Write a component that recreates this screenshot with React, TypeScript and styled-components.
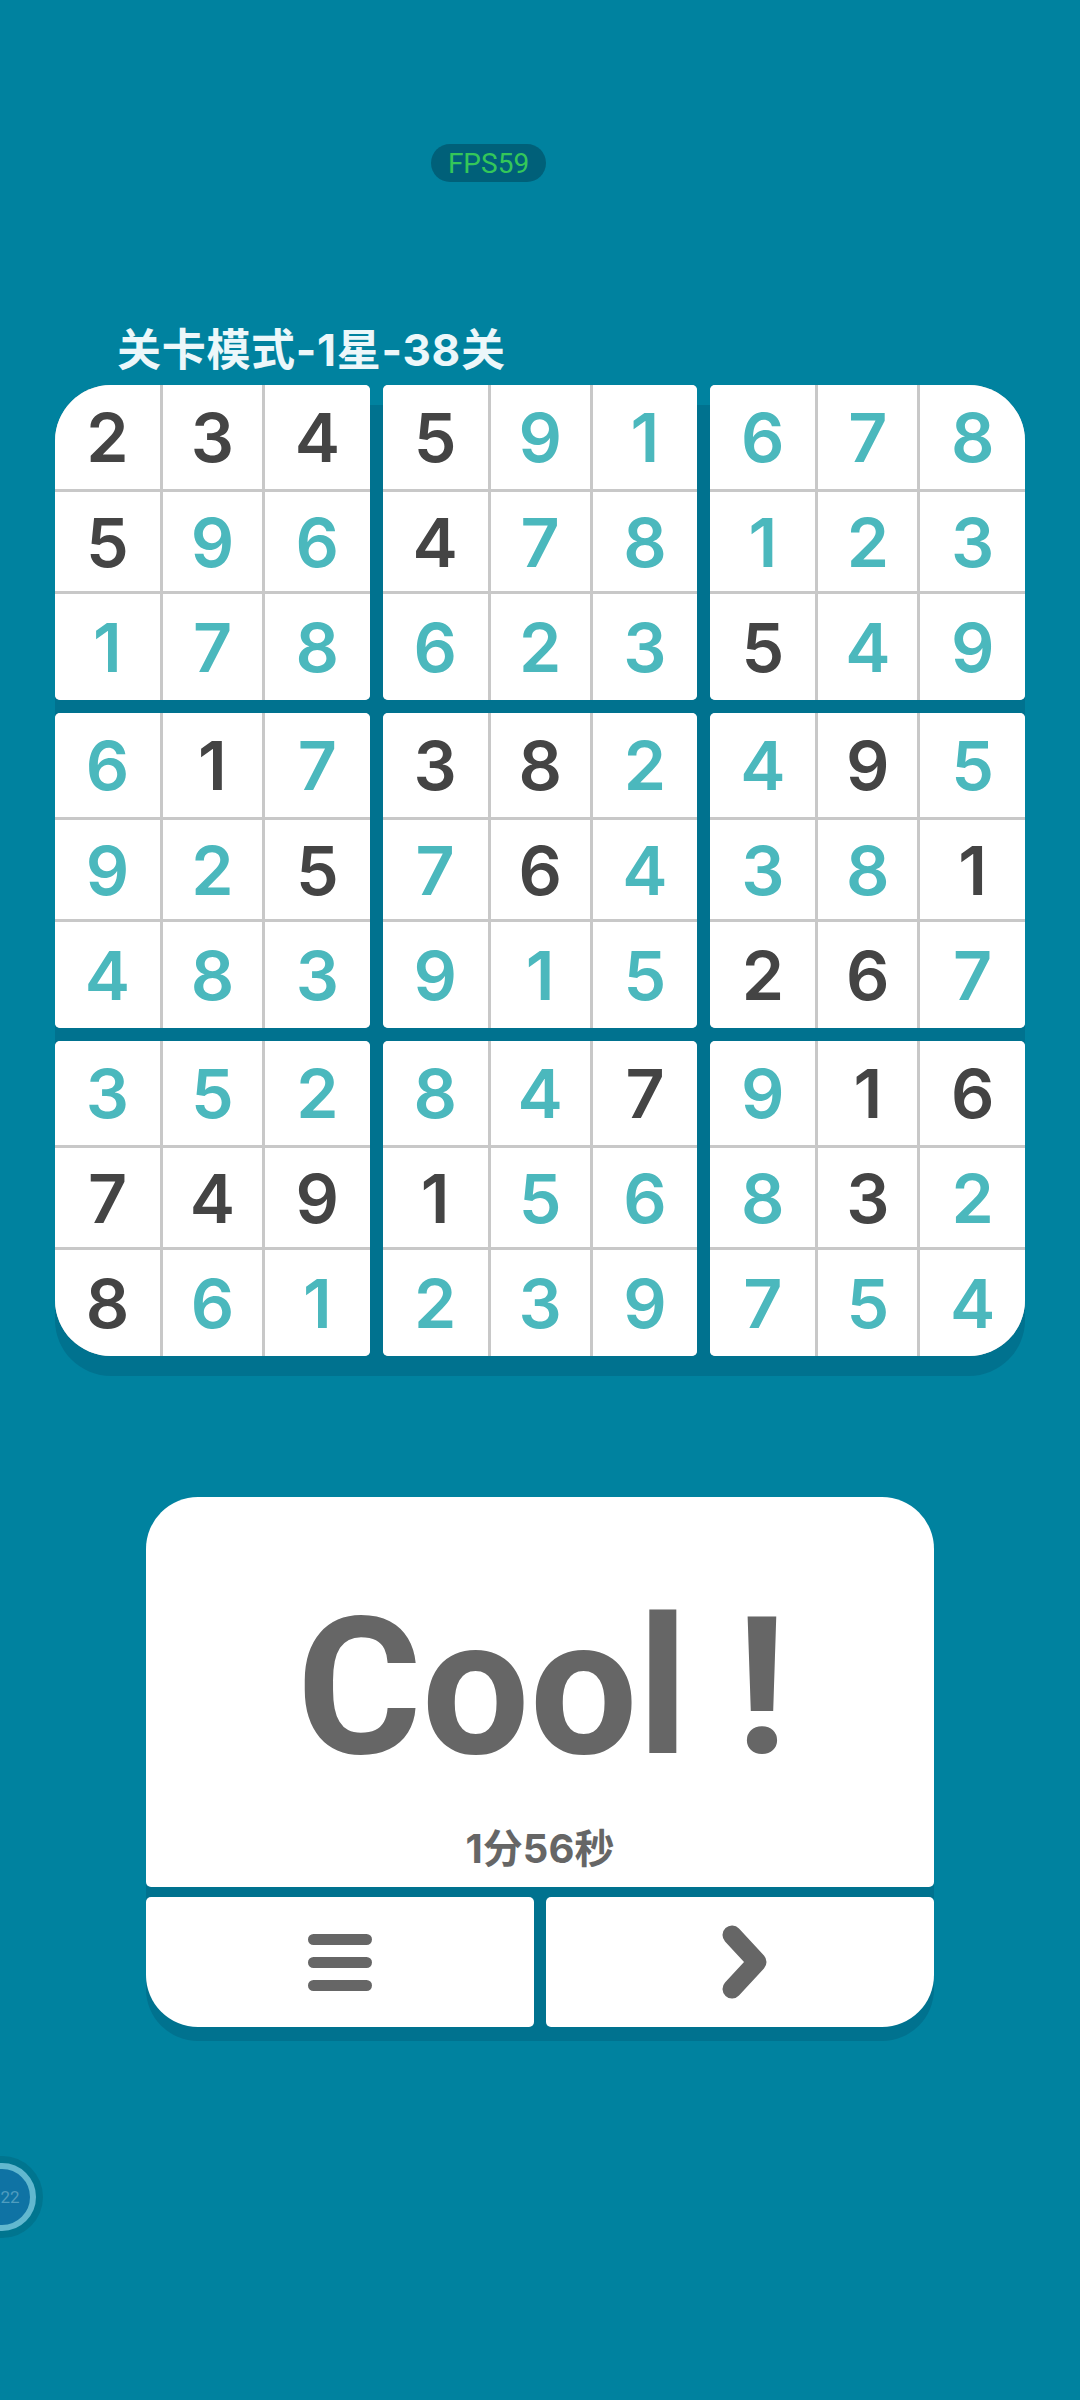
import React from 'react';
import styled, { createGlobalStyle } from 'styled-components';

const BG = '#00829f';
const SHADE = '#00728f';
const GREY = '#666666';

const rows = [
  '234591678',
  '596478123',
  '178623549',
  '617382495',
  '925764381',
  '483915267',
  '352847916',
  '749156832',
  '861239754',
];

// 1 = pre-filled digit (dark), 0 = digit entered by the player
const givens = [
  '111100000',
  '100100000',
  '000000100',
  '010110010',
  '001010001',
  '000000110',
  '000001011',
  '111100010',
  '100000000',
];

const GlobalStyle = createGlobalStyle`
  html, body {
    margin: 0;
    padding: 0;
    background: ${BG};
  }
`;

const Page = styled.div`
  position: relative;
  display: flex;
  flex-direction: column;
  width: 1080px;
  height: 2400px;
  overflow: hidden;
  background: ${BG};
  font-family: Inter, 'Noto Sans CJK SC', sans-serif;
`;

const FpsPill = styled.div`
  align-self: flex-start;
  display: flex;
  align-items: center;
  justify-content: center;
  width: 115px;
  height: 38px;
  margin: 144px 0 0 431px;
  border-radius: 19px;
  background: #006079;
  color: #34c759;
  font-family: Roboto, sans-serif;
  font-size: 28px;
`;

const Title = styled.div`
  margin: 142px 0 0 117px;
  height: 52px;
  line-height: 52px;
  color: #ecf7fa;
  font-size: 44px;
  font-weight: 700;
  letter-spacing: 0.7px;
`;

const Board = styled.div`
  position: relative;
  display: grid;
  grid-template-columns: repeat(3, 1fr);
  gap: 13px;
  width: 970px;
  margin: 9px 0 0 55px;

  &::before {
    content: '';
    position: absolute;
    inset: 20px 0 -20px;
    border-radius: 56px;
    background: ${SHADE};
  }
`;

const Block = styled.div<{ $corner?: string }>`
  position: relative;
  display: grid;
  grid-template-columns: 105px 99px 1fr;
  grid-template-rows: 104px 99px 1fr;
  gap: 3px;
  height: 315px;
  overflow: hidden;
  background: #c8c8c8;
  border-radius: 5px;
  ${(p) => p.$corner && `border-${p.$corner}-radius: 56px;`}
`;

const Cell = styled.div<{ $given: boolean }>`
  display: flex;
  align-items: center;
  justify-content: center;
  background: #fff;
  color: ${(p) => (p.$given ? '#444444' : '#4bb8bd')};
  font-size: 68px;
  font-weight: 600;
`;

const ResultPanel = styled.div`
  position: relative;
  display: flex;
  flex-direction: column;
  gap: 10px;
  width: 788px;
  margin: 141px 0 0 146px;

  &::before {
    content: '';
    position: absolute;
    inset: 14px 0 -14px;
    border-radius: 52px;
    background: ${SHADE};
  }
`;

const ResultCard = styled.div`
  position: relative;
  display: flex;
  flex-direction: column;
  align-items: center;
  height: 390px;
  border-radius: 52px 52px 5px 5px;
  background: #fff;
  color: ${GREY};
`;

const CoolText = styled.div`
  margin: 84px 0 0 4px;
  height: 214px;
  line-height: 214px;
  font-family: Roboto, sans-serif;
  font-size: 191px;
  font-weight: 700;
  white-space: pre;
`;

const TimeText = styled.div`
  margin-top: 30px;
  line-height: 48px;
  font-size: 40px;
  font-weight: 700;
`;

const ButtonRow = styled.div`
  position: relative;
  display: grid;
  grid-template-columns: 1fr 1fr;
  gap: 12px;
`;

const ActionButton = styled.button<{ $side: 'left' | 'right' }>`
  display: flex;
  align-items: center;
  justify-content: center;
  height: 130px;
  padding: 0;
  border: 0;
  background: #fff;
  border-radius: ${(p) => (p.$side === 'left' ? '5px 5px 5px 52px' : '5px 5px 52px 5px')};

  svg.chevron {
    margin-left: 10px;
  }
`;

const TimerBadge = styled.div`
  position: absolute;
  left: -39px;
  top: 2156px;
  display: flex;
  align-items: center;
  justify-content: center;
  width: 82px;
  height: 82px;
  border-radius: 50%;
  background: #00758f;
`;

const TimerRing = styled.div`
  display: flex;
  align-items: center;
  justify-content: center;
  box-sizing: border-box;
  width: 68px;
  height: 68px;
  border: 6px solid #62b8cf;
  border-radius: 50%;
  background: #0f73a4;
  color: #4f9dbf;
  font-family: Roboto, sans-serif;
  font-size: 17px;
  padding-left: 16px;
`;

const cornerFor = (b: number) =>
  ({ 0: 'top-left', 2: 'top-right', 6: 'bottom-left', 8: 'bottom-right' } as Record<number, string>)[b];

const App: React.FC = () => {
  const blocks = Array.from({ length: 9 }, (_, b) => {
    const top = Math.floor(b / 3) * 3;
    const left = (b % 3) * 3;
    const cells: { value: string; given: boolean }[] = [];
    for (let r = top; r < top + 3; r++) {
      for (let c = left; c < left + 3; c++) {
        cells.push({ value: rows[r][c], given: givens[r][c] === '1' });
      }
    }
    return cells;
  });

  return (
    <Page>
      <GlobalStyle />
      <FpsPill>FPS59</FpsPill>
      <Title>关卡模式-1星-38关</Title>
      <Board>
        {blocks.map((cells, b) => (
          <Block key={b} $corner={cornerFor(b)}>
            {cells.map((cell, i) => (
              <Cell key={i} $given={cell.given}>
                {cell.value}
              </Cell>
            ))}
          </Block>
        ))}
      </Board>
      <ResultPanel>
        <ResultCard>
          <CoolText>Cool !</CoolText>
          <TimeText>1分56秒</TimeText>
        </ResultCard>
        <ButtonRow>
          <ActionButton $side="left">
            <svg width="64" height="57" viewBox="0 0 64 57" fill={GREY}>
              <rect x="0" y="0" width="64" height="11" rx="5.5" />
              <rect x="0" y="23" width="64" height="11" rx="5.5" />
              <rect x="0" y="46" width="64" height="11" rx="5.5" />
            </svg>
          </ActionButton>
          <ActionButton $side="right">
            <svg className="chevron" width="46" height="74" viewBox="0 0 46 74" fill="none">
              <polyline
                points="10,10 35,37 10,64"
                stroke={GREY}
                strokeWidth="19"
                strokeLinecap="round"
                strokeLinejoin="round"
              />
            </svg>
          </ActionButton>
        </ButtonRow>
      </ResultPanel>
      <TimerBadge>
        <TimerRing>22</TimerRing>
      </TimerBadge>
    </Page>
  );
};

export default App;
